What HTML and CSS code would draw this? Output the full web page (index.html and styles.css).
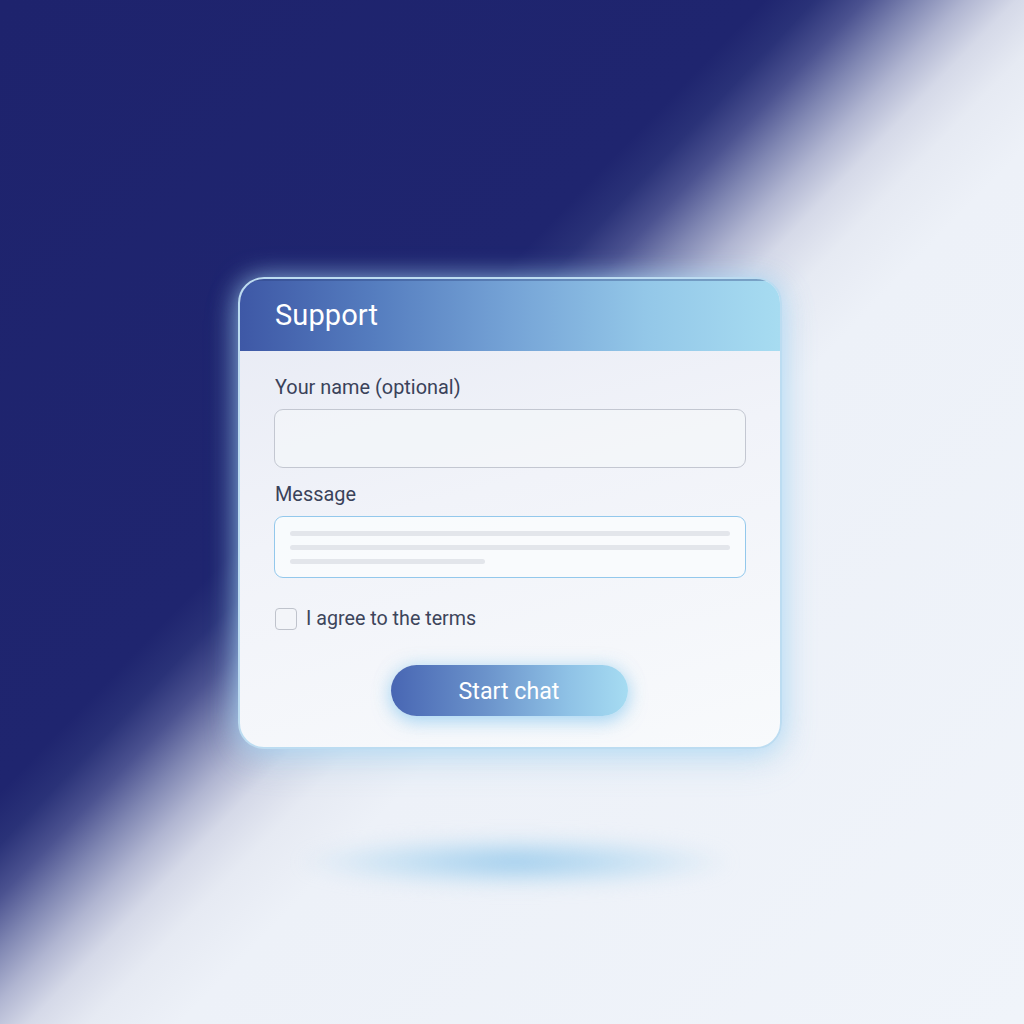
FILE: index.html
```html
<!DOCTYPE html>
<html lang="en">
<head>
<meta charset="utf-8">
<title>Support</title>
<link rel="stylesheet" href="styles.css">
</head>
<body>
<main class="stage">
  <section class="card">
    <header class="card-head">
      <h1 class="card-title">Support</h1>
    </header>
    <form class="card-body">
      <label class="field-label" for="name">Your name (optional)</label>
      <div class="input" id="name"></div>
      <label class="field-label label-msg" for="msg">Message</label>
      <div class="textarea" id="msg">
        <span class="ph-line"></span>
        <span class="ph-line"></span>
        <span class="ph-line short"></span>
      </div>
      <div class="check-row">
        <span class="checkbox"></span>
        <span class="check-text">I agree to the terms</span>
      </div>
      <div class="actions">
        <button type="button" class="btn">Start chat</button>
      </div>
    </form>
  </section>
  <div class="floor-shadow"></div>
</main>
</body>
</html>
```

FILE: styles.css
```css
html, body {
  margin: 0;
  padding: 0;
}
body {
  width: 1024px;
  height: 1024px;
  overflow: hidden;
  font-family: Roboto, "Liberation Sans", sans-serif;
  background: linear-gradient(134deg,
    #1e236d 0%,
    #1f256f 38%,
    #2a3278 40.5%,
    #4b5290 43%,
    #7f86b2 45.5%,
    #b0b5d1 48%,
    #d5d9e8 50.5%,
    #e6eaf3 53.5%,
    #edf1f8 58%,
    #f0f4fa 100%);
}
.stage {
  display: flex;
  flex-direction: column;
  align-items: flex-start;
  padding: 277px 0 0 238px;
}
.card {
  width: 544px;
  box-sizing: border-box;
  border: 2px solid #bcdcf1;
  border-radius: 26px;
  overflow: hidden;
  background: linear-gradient(165deg, #e7eaf4 0%, #f1f3f9 45%, #f8fafc 100%);
  box-shadow: 0 0 26px rgba(165, 215, 248, 0.7), 0 12px 34px rgba(140, 195, 230, 0.3);
}
.card-head {
  height: 72px;
  display: flex;
  align-items: center;
  padding-left: 35px;
  background: linear-gradient(90deg, #3e58a6 0%, #557dbf 25%, #75a3d6 50%, #93c7e8 75%, #a7dcf1 100%);
  box-shadow: inset 0 2px 0 rgba(40, 60, 120, 0.35);
}
.card-title {
  margin: 0;
  font-size: 29px;
  font-weight: 400;
  color: #ffffff;
  letter-spacing: 0.1px;
}
.card-body {
  display: flex;
  flex-direction: column;
  padding: 25px 34px 31px 34px;
  margin: 0;
}
.field-label {
  font-size: 19.9px;
  line-height: 24px;
  color: #3a425a;
  padding-left: 1px;
}
.input {
  margin-top: 9px;
  height: 59px;
  box-sizing: border-box;
  border: 1.5px solid #c3c7d1;
  border-radius: 9px;
  background: rgba(244, 246, 250, 0.7);
}
.label-msg {
  margin-top: 15px;
}
.textarea {
  margin-top: 9px;
  height: 62px;
  box-sizing: border-box;
  border: 1.5px solid #93c8ec;
  border-radius: 9px;
  background: rgba(250, 252, 254, 0.8);
  padding: 14px 15px 0 15px;
  display: flex;
  flex-direction: column;
  gap: 9px;
}
.ph-line {
  display: block;
  height: 5px;
  border-radius: 3px;
  background: #e3e6eb;
}
.ph-line.short {
  width: 195px;
}
.check-row {
  margin-top: 29px;
  display: flex;
  align-items: center;
  gap: 9px;
}
.checkbox {
  width: 22px;
  height: 22px;
  box-sizing: border-box;
  border: 1.5px solid #bfc3cc;
  border-radius: 4px;
  background: #f3f5f9;
  margin-left: 1px;
}
.check-text {
  font-size: 19.7px;
  color: #3d455b;
}
.actions {
  margin-top: 35px;
  display: flex;
  justify-content: center;
}
.btn {
  width: 237px;
  height: 51px;
  border: none;
  border-radius: 26px;
  font-family: Roboto, "Liberation Sans", sans-serif;
  font-size: 23.2px;
  color: #ffffff;
  background: linear-gradient(90deg, #4866b3 0%, #6b93cb 40%, #8fc2e6 75%, #a6dcf2 100%);
  box-shadow: 0 6px 18px rgba(140, 200, 240, 0.6), 0 0 16px rgba(170, 220, 245, 0.5);
  margin-left: -2px;
}
.floor-shadow {
  margin-top: 88px;
  margin-left: 62px;
  width: 430px;
  height: 50px;
  border-radius: 50%;
  background: radial-gradient(ellipse at center, rgba(150, 200, 235, 0.95) 0%, rgba(175, 215, 240, 0.6) 40%, rgba(220, 235, 248, 0) 72%);
  filter: blur(9px);
}
```
